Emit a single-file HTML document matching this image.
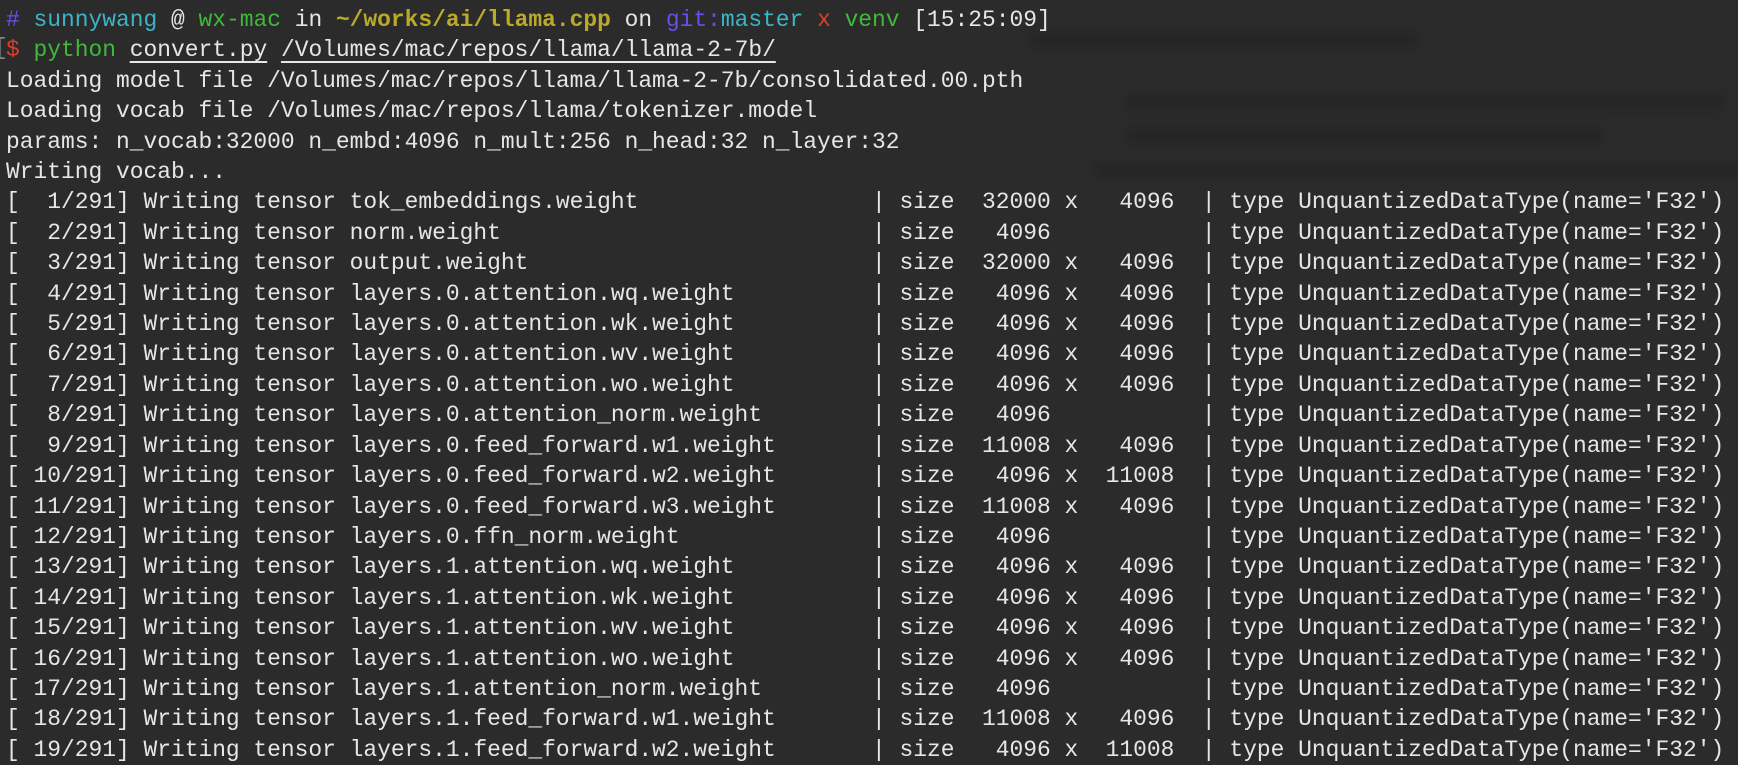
<!DOCTYPE html>
<html><head><meta charset="utf-8"><style>
html,body{margin:0;padding:0;width:1738px;height:746px;overflow:hidden;background:#2b2b2b}
.blur{position:absolute;background:#1f1f1f;filter:blur(5px);opacity:.45}
pre{position:absolute;left:6px;top:5px;margin:0;font-family:"Liberation Mono",monospace;font-size:22.92px;line-height:30.4px;color:#e6e6e6;white-space:pre}
.p{color:#6b4ee8}.c{color:#3cb5c8}.g{color:#3fb93a}.y{color:#b9aa2a;font-weight:bold}.r{color:#d8402c}.gr{color:#888}
u{text-decoration:underline;text-underline-offset:5px}
</style></head><body>
<div class="blur" style="left:1030px;top:32px;width:390px;height:16px"></div>
<div class="blur" style="left:1125px;top:95px;width:600px;height:16px"></div>
<div class="blur" style="left:1125px;top:128px;width:480px;height:16px"></div>
<div class="blur" style="left:1095px;top:162px;width:643px;height:16px"></div>
<pre><span class="p">#</span> <span class="c">sunnywang</span> @ <span class="g">wx-mac</span> in <span class="y">~/works/ai/llama.cpp</span> on <span class="p">git:</span><span class="c">master</span> <span class="r">x</span> <span class="g">venv</span> [15:25:09]
<span class="r">$</span> <span class="g">python</span> <u>convert.py</u> <u>/Volumes/mac/repos/llama/llama-2-7b/</u>
Loading model file /Volumes/mac/repos/llama/llama-2-7b/consolidated.00.pth
Loading vocab file /Volumes/mac/repos/llama/tokenizer.model
params: n_vocab:32000 n_embd:4096 n_mult:256 n_head:32 n_layer:32
Writing vocab...
[  1/291] Writing tensor tok_embeddings.weight                 | size  32000 x   4096  | type UnquantizedDataType(name='F32')
[  2/291] Writing tensor norm.weight                           | size   4096           | type UnquantizedDataType(name='F32')
[  3/291] Writing tensor output.weight                         | size  32000 x   4096  | type UnquantizedDataType(name='F32')
[  4/291] Writing tensor layers.0.attention.wq.weight          | size   4096 x   4096  | type UnquantizedDataType(name='F32')
[  5/291] Writing tensor layers.0.attention.wk.weight          | size   4096 x   4096  | type UnquantizedDataType(name='F32')
[  6/291] Writing tensor layers.0.attention.wv.weight          | size   4096 x   4096  | type UnquantizedDataType(name='F32')
[  7/291] Writing tensor layers.0.attention.wo.weight          | size   4096 x   4096  | type UnquantizedDataType(name='F32')
[  8/291] Writing tensor layers.0.attention_norm.weight        | size   4096           | type UnquantizedDataType(name='F32')
[  9/291] Writing tensor layers.0.feed_forward.w1.weight       | size  11008 x   4096  | type UnquantizedDataType(name='F32')
[ 10/291] Writing tensor layers.0.feed_forward.w2.weight       | size   4096 x  11008  | type UnquantizedDataType(name='F32')
[ 11/291] Writing tensor layers.0.feed_forward.w3.weight       | size  11008 x   4096  | type UnquantizedDataType(name='F32')
[ 12/291] Writing tensor layers.0.ffn_norm.weight              | size   4096           | type UnquantizedDataType(name='F32')
[ 13/291] Writing tensor layers.1.attention.wq.weight          | size   4096 x   4096  | type UnquantizedDataType(name='F32')
[ 14/291] Writing tensor layers.1.attention.wk.weight          | size   4096 x   4096  | type UnquantizedDataType(name='F32')
[ 15/291] Writing tensor layers.1.attention.wv.weight          | size   4096 x   4096  | type UnquantizedDataType(name='F32')
[ 16/291] Writing tensor layers.1.attention.wo.weight          | size   4096 x   4096  | type UnquantizedDataType(name='F32')
[ 17/291] Writing tensor layers.1.attention_norm.weight        | size   4096           | type UnquantizedDataType(name='F32')
[ 18/291] Writing tensor layers.1.feed_forward.w1.weight       | size  11008 x   4096  | type UnquantizedDataType(name='F32')
[ 19/291] Writing tensor layers.1.feed_forward.w2.weight       | size   4096 x  11008  | type UnquantizedDataType(name='F32')</pre>
<span style="position:absolute;left:-6px;top:35px;font-family:'Liberation Mono',monospace;font-size:22.92px;color:#888">[</span>
</body></html>
